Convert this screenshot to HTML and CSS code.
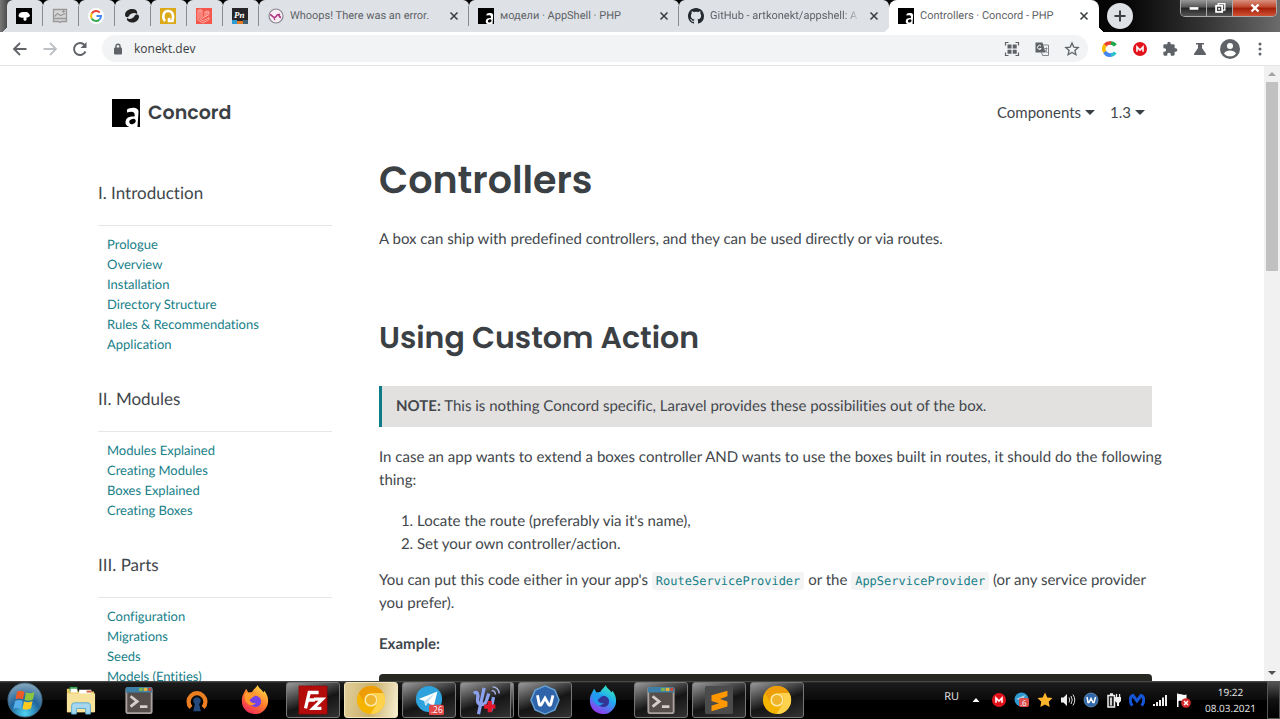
FILE: index.html
```html
<!DOCTYPE html>
<html lang="en">
<head>
    <meta charset="UTF-8">
    <meta name="viewport" content="width=device-width, initial-scale=1.0">
    <title>Controllers · Concord - PHP</title>
    <link rel="stylesheet" href="styles.css">
</head>
<body>
    <!-- shared icons -->
    <svg class="sprite" width="0" height="0" aria-hidden="true">
        <symbol id="i-appshell" viewBox="0 0 28 28">
            <rect width="28" height="28" fill="#000"/>
            <path d="M15 10.500C18 8 27 7.500 26.500 13L25.500 28H22C17 29 13.500 27 13.500 23.500C13.500 19 17 17 22.500 17.500C23.500 12.500 20 12 15 13.500z" fill="#fff"/>
            <ellipse cx="20.500" cy="22.500" rx="3.300" ry="2.500" fill="#000" transform="rotate(-25 20.500 22.500)"/>
        </symbol>
        <symbol id="i-close" viewBox="0 0 16 16">
            <path d="M4.500 4.500l7 7M11.500 4.500l-7 7" stroke="#3c4043" stroke-width="1.600"/>
        </symbol>
        <symbol id="i-mega" viewBox="0 0 16 16">
            <circle cx="8" cy="8" r="7" fill="#e3131b"/>
            <path d="M5 10.800V6L8 9l3-3v4.800" fill="none" stroke="#fff" stroke-width="1.600"/>
        </symbol>
        <symbol id="i-terminal" viewBox="0 0 32 32">
            <rect x="2.500" y="3" width="27" height="27" rx="2" fill="#564e4b" stroke="#a9a29e" stroke-width="2"/>
            <path d="M2 4a2 2 0 0 1 2-2h24a2 2 0 0 1 2 2v4H2z" fill="#3d7fa6"/>
            <path d="M16 3h4v3.500h-4z" fill="#7db04e"/><path d="M21 3h4v3.500h-4z" fill="#e0b53a"/><path d="M26 3h3v3.500h-3z" fill="#cf4632"/>
            <path d="M7 12l7 5.500L7 23M17 23h8" fill="none" stroke="#d5ceca" stroke-width="3"/>
        </symbol>
        <symbol id="i-canary" viewBox="0 0 32 32">
            <circle cx="16" cy="16" r="15" fill="#f5b400"/>
            <path d="M3 8.500A15 15 0 0 1 29 8.500H16A7.500 7.500 0 0 0 9.500 19.700z" fill="#ee9d09"/>
            <path d="M29 8.500A15 15 0 0 1 15.500 31l7-11.500A7.500 7.500 0 0 0 16 8.500z" fill="#ffd24d"/>
            <circle cx="16" cy="16" r="7" fill="#fde9a8"/>
            <circle cx="16" cy="16" r="5.300" fill="#efb32c"/>
        </symbol>
        <symbol id="i-shape-w" viewBox="0 0 32 32">
            <path d="M16 1l10.500 4.500L31 16l-4.500 10.500L16 31 5.500 26.500 1 16 5.500 5.500z" fill="#2f64ab" stroke="#65a4d8" stroke-width="1.500"/>
            <path d="M8 11l2 10c.5 1 1.500 1 2 0l4-7 4 7c.5 1 1.500 1 2 0l2.500-10" fill="none" stroke="#fff" stroke-width="3"/>
        </symbol>
        <symbol id="i-fox" viewBox="0 0 32 32">
            <path d="M5 7l1.500-3 2.500 4 4-.5C15 4 18 2 19 0c1 4 4 4 6 8l1-2c4 5 5 11 3 16-3 7-9 9.500-14 9C7 30 1.500 24 2 16c0-4 1.500-6 3-9z"/>
        </symbol>
    </svg>

    <header class="browser">
        <div class="tab-strip">
            <div class="tab pinned first">
                <svg class="icon" viewBox="0 0 16 16"><rect width="16" height="16" fill="#000"/><path d="M2.500 8c0-2.500 2-4 5-4h3c2 .5 3 2 3.500 3.500-.5 1.500-2 2-3.500 2L10.500 12l-1.500 1-1.500-1V9.500C5 10 3.500 9.500 2.500 8z" fill="#fff"/></svg>
            </div>
            <div class="tab pinned">
                <svg class="icon" viewBox="0 0 16 16"><path d="M1.500 1.500h13v9h-13zM1.500 13.500h5L8 14.500l1.500-1h5v-3h-13z" fill="#d5d5d5" stroke="#999" stroke-width="1.300"/><path d="M2.500 8.500l3-3 3 2 5-2M11.500 2v3M10 3.500h3" fill="none" stroke="#999" stroke-width="1.200"/></svg>
            </div>
            <div class="tab pinned">
                <svg class="icon" viewBox="0 0 16 16"><circle cx="8" cy="8" r="8" fill="#fff"/><g fill="none" stroke-width="2"><path d="M11.700 4.500A5 5 0 0 0 3.700 5.500" stroke="#ea4335"/><path d="M3.700 5.500a5 5 0 0 0 0 5" stroke="#fbbc05"/><path d="M3.700 10.500a5 5 0 0 0 7.600 1.200" stroke="#34a853"/><path d="M11.300 11.700A5 5 0 0 0 13 8H8.500" stroke="#4285f4"/></g></svg>
            </div>
            <div class="tab pinned">
                <svg class="icon" viewBox="0 0 16 16"><path d="M1 7C1 3 5 .5 9 1c3 .3 5 2.500 4 5-2-1.500-6-1.500-8 2-1.500 2-3.500 1.500-4-1z" fill="#222"/><path d="M15 8.500c0 4-4 6.500-7.500 6-3-.3-5-2-4.500-4.500 3 2 6 .5 7.500-2 1.500-2 4-2 4.500.5z" fill="#222"/></svg>
            </div>
            <div class="tab pinned">
                <svg class="icon" viewBox="0 0 16 16"><rect width="16" height="16" fill="#dcaa18"/><path d="M5 13C2 10 3 3 8 3s6 5 4.500 10H9V9.500" fill="none" stroke="#fff" stroke-width="2.600"/><circle cx="8" cy="8.500" r="1.700" fill="#dcaa18"/></svg>
            </div>
            <div class="tab pinned">
                <svg class="icon" viewBox="0 0 16 16"><rect width="16" height="16" fill="#f4574c"/><path d="M2 2.500l2-1 2 1v8l7-4V4L11 3 9 4v5M2 2.500V12l5 3 6-3.500v-2M2 2.500l2 1.200 2-1.200M4 4v7l3 2 6-3.500M9 4l2 1.200L13 4M11 5.500V8" fill="none" stroke="#ffc2bd" stroke-width=".8"/></svg>
            </div>
            <div class="tab pinned">
                <svg class="icon" viewBox="0 0 16 16"><rect width="16" height="16" fill="#26262a"/><path d="M0 12h5v4H0z" fill="#2d9ad0"/><path d="M5 13h6v3H5z" fill="#e57b22"/><path d="M11 12h5v4h-5z" fill="#3c5d72"/><text class="pn-mark" x="2" y="10">Pn</text></svg>
            </div>
            <div class="tab">
                <svg class="icon" viewBox="0 0 16 16"><circle cx="8" cy="8" r="7" fill="#f6eef4" stroke="#8a8790" stroke-width="1.200"/><path d="M2 6.500c2 .500 2.500 3 4.500 3s2-3 3.500-3 1 3 3 3" fill="none" stroke="#b0347f" stroke-width="1.700"/><path d="M6 10l1 2M10 7l2-1" stroke="#b0347f" stroke-width="1.200"/></svg>
                <span class="tab-title">Whoops! There was an error.</span>
                <button class="tab-close" aria-label="Close tab"><svg class="icon"><use href="#i-close"/></svg></button>
            </div>
            <div class="tab">
                <svg class="icon"><use href="#i-appshell"/></svg>
                <span class="tab-title">модели · AppShell · PHP</span>
                <button class="tab-close" aria-label="Close tab"><svg class="icon"><use href="#i-close"/></svg></button>
            </div>
            <div class="tab last">
                <svg class="icon" viewBox="0 0 16 16"><path fill="#24292e" d="M8 0C3.580 0 0 3.580 0 8c0 3.540 2.290 6.530 5.470 7.590.4.070.55-.17.55-.38 0-.19-.01-.82-.01-1.490-2.010.37-2.530-.49-2.690-.94-.09-.23-.48-.94-.82-1.130-.28-.15-.68-.52-.01-.53.63-.01 1.080.58 1.230.82.72 1.210 1.870.87 2.330.66.07-.52.28-.87.51-1.070-1.780-.2-3.640-.89-3.640-3.950 0-.87.31-1.590.82-2.150-.08-.2-.36-1.020.08-2.120 0 0 .67-.21 2.200.82.64-.18 1.320-.27 2-.27s1.360.09 2 .27c1.530-1.040 2.200-.82 2.200-.82.44 1.100.16 1.920.08 2.120.51.56.82 1.270.82 2.150 0 3.070-1.870 3.750-3.650 3.950.29.25.54.73.54 1.480 0 1.070-.01 1.930-.01 2.200 0 .21.15.46.55.38A8.010 8.010 0 0 0 16 8c0-4.420-3.580-8-8-8z"/></svg>
                <span class="tab-title fade">GitHub - artkonekt/appshell: A</span>
                <button class="tab-close" aria-label="Close tab"><svg class="icon"><use href="#i-close"/></svg></button>
            </div>
            <div class="tab active">
                <svg class="icon"><use href="#i-appshell"/></svg>
                <span class="tab-title">Controllers · Concord - PHP</span>
                <button class="tab-close" aria-label="Close tab"><svg class="icon"><use href="#i-close"/></svg></button>
            </div>
            <button class="new-tab" aria-label="New tab">
                <svg class="icon" viewBox="0 0 16 16"><path d="M8 2.500v11M2.500 8h11" stroke="#3c4043" stroke-width="2"/></svg>
            </button>
            <div class="window-controls">
                <button aria-label="Minimize"><svg viewBox="0 0 16 16"><rect x="3" y="7" width="10" height="3" fill="#fff"/></svg></button>
                <button aria-label="Restore"><svg viewBox="0 0 16 16"><path d="M6 5V3h7.500v7.500H11" fill="none" stroke="#fff" stroke-width="1.500"/><rect x="3.500" y="5.500" width="7" height="7" fill="#444" stroke="#fff" stroke-width="2"/><path d="M6 8h2v2H6z" fill="#fff"/></svg></button>
                <button class="win-close" aria-label="Close"><svg viewBox="0 0 16 16"><path d="M4 4l8 8M12 4l-8 8" stroke="#fff" stroke-width="2.800"/></svg></button>
            </div>
        </div>

        <div class="toolbar">
            <button class="tool" aria-label="Back"><svg class="icon" viewBox="0 0 16 16"><path d="M14.500 8h-12M8 2L2 8l6 6" fill="none" stroke="#5f6368" stroke-width="1.800"/></svg></button>
            <button class="tool" aria-label="Forward"><svg class="icon" viewBox="0 0 16 16"><path d="M1.500 8h12M8 2l6 6-6 6" fill="none" stroke="#bdc1c6" stroke-width="1.800"/></svg></button>
            <button class="tool" aria-label="Reload"><svg class="icon" viewBox="0 0 16 16"><path d="M13.500 10.500A6 6 0 1 1 12.500 4" fill="none" stroke="#5f6368" stroke-width="1.900"/><path d="M14.500 1v6h-6z" fill="#5f6368"/></svg></button>
            <div class="omnibox">
                <svg class="lock" viewBox="0 0 10 12"><rect x="1" y="4.500" width="8" height="7" rx="1" fill="#5f6368"/><path d="M3 5V3.200a2 2 0 0 1 4 0V5" fill="none" stroke="#5f6368" stroke-width="1.400"/></svg>
                <input type="text" aria-label="Address" value="konekt.dev">
                <button class="tool" aria-label="QR code"><svg class="icon" viewBox="0 0 16 16"><path d="M1.500 4.500v-3h3M11.500 1.500h3v3M14.500 11.500v3h-3M4.500 14.500h-3v-3" fill="none" stroke="#5f6368" stroke-width="1.200"/><path d="M3.500 3.500h4v4h-4zM8.700 3.500h4v4h-4zM3.500 8.700h4v4h-4zM8.700 8.700h4v4h-4z" fill="#5f6368"/></svg></button>
                <button class="tool" aria-label="Translate"><svg class="icon" viewBox="0 0 16 16"><path d="M9 4h5.500v10.500H8.500l-1-3" fill="#f1f3f4" stroke="#80868b"/><path d="M1.500 1.500h7l3 10h-10z" fill="#5f6368"/><path d="M10.500 7.500h3M12.500 6.500v1c0 1.500-.5 2.500-1 3.500M11.500 9.500l2 2.500" fill="none" stroke="#80868b"/><path d="M7 5a2 2 0 1 0 .200 2.500H5.500" fill="none" stroke="#fff"/></svg></button>
                <button class="tool" aria-label="Bookmark"><svg class="icon" viewBox="0 0 16 16"><path d="M8 2l1.800 4.100 4.400.400-3.300 2.900 1 4.300L8 11.400l-3.900 2.300 1-4.300L1.800 6.500l4.400-.400z" fill="none" stroke="#5f6368" stroke-width="1.300"/></svg></button>
            </div>
            <button class="tool" aria-label="C extension"><svg class="icon" viewBox="0 0 16 16"><g fill="none" stroke-width="3.600"><path d="M13.300 4.500A6 6 0 0 0 8 2" stroke="#18a74b"/><path d="M9 2.100A6 6 0 0 0 3 4.500" stroke="#ea4335"/><path d="M3.200 4A6 6 0 0 0 3 11.300" stroke="#fbbc05"/><path d="M2.800 11a6 6 0 0 0 7 2.700" stroke="#4285f4"/><path d="M9 13.900a6 6 0 0 0 4.300-2.400" stroke="#2dc0cd"/></g></svg></button>
            <button class="tool" aria-label="MEGA"><svg class="icon"><use href="#i-mega"/></svg></button>
            <button class="tool" aria-label="Extensions"><svg class="icon" viewBox="0 0 24 24"><path fill="#5f6368" d="M20.500 11H19V7c0-1.100-.9-2-2-2h-4V3.500a2.500 2.500 0 0 0-5 0V5H4c-1.100 0-2 .9-2 2v3.800h1.500a2.700 2.700 0 0 1 0 5.400H2V20c0 1.100.9 2 2 2h3.800v-1.500a2.700 2.700 0 0 1 5.400 0V22H17c1.100 0 2-.9 2-2v-4h1.500a2.500 2.500 0 0 0 0-5z"/></svg></button>
            <button class="tool" aria-label="Labs"><svg class="icon" viewBox="0 0 16 16"><path d="M4 2h8v1.500h-2V7l3.800 5.500c.5.800.2 1.500-.8 1.500H3c-1 0-1.300-.7-.8-1.500L6 7V3.500H4z" fill="#5f6368"/></svg></button>
            <button class="tool profile" aria-label="Profile"><svg class="avatar" viewBox="0 0 20 20"><circle cx="10" cy="10" r="10" fill="#5f6368"/><circle cx="10" cy="7" r="3" fill="#fff"/><path d="M4 14.500c1.200-2.200 3.500-3 6-3s4.800.800 6 3c-1.500 2-3.500 2.800-6 2.800S5.500 16.500 4 14.500z" fill="#fff"/></svg></button>
            <button class="tool" aria-label="Menu"><svg class="icon" viewBox="0 0 16 16"><g fill="#5f6368"><circle cx="8" cy="3" r="1.500"/><circle cx="8" cy="8" r="1.500"/><circle cx="8" cy="13" r="1.500"/></g></svg></button>
        </div>
    </header>

    <div class="viewport">
        <div class="page">
            <div class="container">
                <nav class="navbar">
                    <a class="brand" href="#">
                        <svg class="brand-logo"><use href="#i-appshell"/></svg>
                        <span>Concord</span>
                    </a>
                    <div class="nav-links">
                        <button class="dropdown">Components</button>
                        <button class="dropdown">1.3</button>
                    </div>
                </nav>

                <div class="columns">
                    <aside class="sidebar">
                        <section>
                            <h4>I. Introduction</h4>
                            <ul>
                                <li><a href="#">Prologue</a></li>
                                <li><a href="#">Overview</a></li>
                                <li><a href="#">Installation</a></li>
                                <li><a href="#">Directory Structure</a></li>
                                <li><a href="#">Rules &amp; Recommendations</a></li>
                                <li><a href="#">Application</a></li>
                            </ul>
                        </section>
                        <section>
                            <h4>II. Modules</h4>
                            <ul>
                                <li><a href="#">Modules Explained</a></li>
                                <li><a href="#">Creating Modules</a></li>
                                <li><a href="#">Boxes Explained</a></li>
                                <li><a href="#">Creating Boxes</a></li>
                            </ul>
                        </section>
                        <section>
                            <h4>III. Parts</h4>
                            <ul>
                                <li><a href="#">Configuration</a></li>
                                <li><a href="#">Migrations</a></li>
                                <li><a href="#">Seeds</a></li>
                                <li><a href="#">Models (Entities)</a></li>
                            </ul>
                        </section>
                    </aside>

                    <main class="content">
                        <h1>Controllers</h1>
                        <p>A box can ship with predefined controllers, and they can be used directly or via routes.</p>
                        <h2>Using Custom Action</h2>
                        <blockquote><strong>NOTE:</strong> This is nothing Concord specific, Laravel provides these possibilities out of the box.</blockquote>
                        <p>In case an app wants to extend a boxes controller AND wants to use the boxes built in routes, it should do the following thing:</p>
                        <ol>
                            <li>Locate the route (preferably via it's name),</li>
                            <li>Set your own controller/action.</li>
                        </ol>
                        <p>You can put this code either in your app's <code>RouteServiceProvider</code> or the <code>AppServiceProvider</code> (or any service provider you prefer).</p>
                        <p><strong>Example:</strong></p>
                        <pre></pre>
                    </main>
                </div>
            </div>
        </div>
        <div class="scrollbar">
            <svg viewBox="0 0 16 16"><path d="M4 10l4-4 4 4z" fill="#a3a3a3"/></svg>
            <div class="track"><div class="thumb"></div></div>
            <svg viewBox="0 0 16 16"><path d="M4 6l4 4 4-4z" fill="#505050"/></svg>
        </div>
    </div>

    <footer class="taskbar">
        <button class="start" aria-label="Start">
            <svg viewBox="0 0 36 36">
                <defs><radialGradient id="orb" cx=".5" cy=".9" r=".9"><stop offset="0" stop-color="#4fd5f5"/><stop offset=".5" stop-color="#1f659c"/><stop offset="1" stop-color="#8ba9bd"/></radialGradient></defs>
                <circle cx="18" cy="18" r="17" fill="url(#orb)" stroke="#456c85"/>
                <path d="M10 10c3-2 5-1 7.500 0l-1.500 7.500c-3-1.200-5-1.200-7.500 0z" fill="#ed5b26"/>
                <path d="M19 10.500c3 1.200 5.500 1 8.500-.5L26 17.500c-3 1.500-5 1.500-8.500.500z" fill="#8cc63f"/>
                <path d="M8 19c3-1.500 5-1.200 7.500 0L14 26.500c-2.500-1.200-5-1-7.500 0z" fill="#56aeea"/>
                <path d="M17 19.500c3 1.200 5.500 1 8.500-.500L24 26.500c-3 1.300-5.500 1.500-8.500.5z" fill="#ffc91e"/>
            </svg>
        </button>
        <button class="task" aria-label="Explorer">
            <svg viewBox="0 0 32 32"><path d="M1 4h10l2 3h17v22H1z" fill="#e8c968"/><path d="M4 2h8v5H4z" fill="#3aa657"/><path d="M5 4h7v4H5zM14 5h13v5H14z" fill="#fff"/><path d="M22 6h5v2h-5z" fill="#d35a3c"/><path d="M1 9h30v20H1z" fill="#f6e29b"/><path d="M6 31v-9q0-3 3-3h14q3 0 3 3v9h-5v-6H11v6z" fill="#a5d8ef" stroke="#58a7cf"/></svg>
        </button>
        <button class="task" aria-label="Terminal"><svg><use href="#i-terminal"/></svg></button>
        <button class="task" aria-label="OpenVPN">
            <svg viewBox="0 0 32 32"><path d="M9.500 24a9 9 0 1 1 13 0" fill="none" stroke="#ea7e20" stroke-width="4.500"/><path d="M16 13a4 4 0 0 1 2.300 7.300L20 28h-8l1.700-7.700A4 4 0 0 1 16 13z" fill="#244a7d"/></svg>
        </button>
        <button class="task" aria-label="Firefox">
            <svg viewBox="0 0 32 32"><defs><linearGradient id="fx" x1=".8" y1="0" x2=".2" y2="1"><stop offset="0" stop-color="#ffe14a"/><stop offset=".5" stop-color="#ff7b29"/><stop offset="1" stop-color="#f0245f"/></linearGradient></defs><use href="#i-fox" fill="url(#fx)"/><circle cx="16.500" cy="17.500" r="6" fill="#7542e5"/><path d="M5 9c5-2 8 1 11 3-3 0-3 3-6 3 0 4 4 5 7 4-3 5-11 2-12-5z" fill="#ff9b2d"/></svg>
        </button>
        <button class="task open" aria-label="FileZilla">
            <svg viewBox="0 0 32 32"><rect x="1" y="1" width="30" height="30" fill="#b40b0b" stroke="#8e0808" stroke-dasharray="2 1"/><path d="M8 25l4-17h10M10 16h8M17 15h9l-10 10h9" fill="none" stroke="#fff" stroke-width="3.500"/></svg>
        </button>
        <button class="task open current" aria-label="Chrome Canary"><svg><use href="#i-canary"/></svg></button>
        <button class="task open" aria-label="Telegram">
            <svg viewBox="0 0 32 32"><circle cx="16" cy="15" r="14" fill="#2ea2dc"/><path d="M5 15l20-8-4 16-6-4-3 3-1-5z" fill="#fff"/><path d="M11 17l11-8-7 9-2 4z" fill="#c3dff0"/><rect x="16" y="21" width="16" height="11" rx="2" fill="#e04747"/><text class="badge-text" x="18" y="30">.26</text></svg>
        </button>
        <button class="task open stacked" aria-label="Psi">
            <svg viewBox="0 0 32 32"><path d="M3 9c4-3 5 1 4 6-1 8 8 8 10 0l2-6M14 3L8 31M24 13l-3 15" fill="none" stroke="#8ba1ee" stroke-width="3.500"/><path d="M22 6c2 0 4 1 4 4M23 2c4 0 7 3 7 7" fill="none" stroke="#aab4e8" stroke-width="1.500"/><path d="M20 17v12M14 23h12" stroke="#e3182d" stroke-width="4.500"/></svg>
        </button>
        <button class="task open" aria-label="W"><svg><use href="#i-shape-w"/></svg></button>
        <button class="task" aria-label="Firefox Developer Edition">
            <svg viewBox="0 0 32 32"><defs><linearGradient id="fd" x1=".8" y1="0" x2=".3" y2="1"><stop offset="0" stop-color="#38f0b5"/><stop offset=".45" stop-color="#21a8f2"/><stop offset="1" stop-color="#9a31ee"/></linearGradient></defs><use href="#i-fox" fill="url(#fd)"/><circle cx="16.500" cy="17.500" r="6" fill="#343494"/><path d="M5 9c5-2 8 1 11 3-3 0-3 3-6 3 0 4 4 5 7 4-3 5-11 2-12-5z" fill="#2199f0"/></svg>
        </button>
        <button class="task open" aria-label="Terminal window"><svg><use href="#i-terminal"/></svg></button>
        <button class="task open" aria-label="Sublime Text">
            <svg viewBox="0 0 32 32"><rect x="1" y="1" width="30" height="30" rx="2" fill="#4b4b4b"/><path d="M8 11l17-5v6l-8 3 8 2.500V23L8 28v-6l8-2.500L8 17z" fill="#ff9800"/></svg>
        </button>
        <button class="task open" aria-label="Chrome Canary window"><svg><use href="#i-canary"/></svg></button>

        <div class="tray">
            <span class="lang">RU</span>
            <svg viewBox="0 0 16 16"><path d="M4.500 10L8 6l3.500 4z" fill="#fff"/></svg>
            <svg><use href="#i-mega"/></svg>
            <svg viewBox="0 0 16 16"><circle cx="7.500" cy="7.500" r="7" fill="#2e98cf"/><path d="M2 7l9-4-2 6z" fill="#a9cfe6"/><rect x="5" y="6" width="10" height="9" rx="2" fill="#dd4b4b"/><text class="badge-mini" x="6" y="14">.6</text></svg>
            <svg viewBox="0 0 16 16"><path d="M8 .500l2.300 4.900 5.200.6-3.800 3.700 1 5.300L8 12.500 3.300 15l1-5.300L.500 6l5.200-.6z" fill="#fdb62c"/></svg>
            <svg viewBox="0 0 16 16"><path d="M1 5.500h2.500L7 2v12l-3.500-3.500H1z" fill="#eee"/><path d="M9 5.500q1.500 2.500 0 5M11 4q2.500 4 0 8M13 2.500q3.500 5.500 0 11" fill="none" stroke="#ddd"/></svg>
            <svg viewBox="0 0 32 32"><circle cx="16" cy="16" r="14" fill="#2f67aa" stroke="#8ac0e4"/><path d="M8 10l2 11h2l4-8 4 8h2l3-11" fill="none" stroke="#fff" stroke-width="3"/></svg>
            <svg viewBox="0 0 16 16"><path d="M2 3.500h6.500V15H2zM4 2h3" fill="#222" stroke="#eee" stroke-width="1.500"/><path d="M4 5.500h2v8H4z" fill="#ccc"/><path d="M9 5h6v4l-2 2v3h-2v-3L9 9zM10 2h1.200v3H10zM13 2h1.200v3H13z" fill="#eee"/></svg>
            <svg viewBox="0 0 16 16"><path d="M3.500 13.500C0 10 1 4 4 3.500L8 9l4-5.500c3 .5 4 6.500.5 10" fill="none" stroke="#1654d8" stroke-width="3"/></svg>
            <svg viewBox="0 0 16 16"><path d="M1 12h2v2H1zM4 10h2v4H4zM7 8h2v6H7zM10 5.500h2V14h-2zM13 3h2v11h-2z" fill="#eee"/></svg>
            <svg viewBox="0 0 16 16"><path d="M2 1.500h1.500V15H2zM3.500 2.500c3-1.500 4 1.500 8 0v6.500c-3 1.500-5-1-8 0z" fill="#fff"/><circle cx="11" cy="11" r="4.800" fill="#d92a2a"/><path d="M9 9l4 4M13 9l-4 4" stroke="#fff" stroke-width="1.500"/></svg>
            <div class="clock">
                <time>19:22</time>
                <time>08.03.2021</time>
            </div>
        </div>
        <button class="show-desktop" aria-label="Show desktop"></button>
    </footer>
</body>
</html>
```
FILE: styles.css
```css
* {
    box-sizing: border-box;
}
body {
    margin: 0;
    height: 100vh;
    display: flex;
    flex-direction: column;
    overflow: hidden;
    background: #fff;
    color: #42474c;
    font-family: Lato, "Open Sans", sans-serif;
    font-size: 15px;
    line-height: 23px;
    text-rendering: geometricPrecision;
    font-variant-ligatures: no-common-ligatures;
}
button {
    border: 0;
    padding: 0;
    background: none;
    color: inherit;
    font: inherit;
}
a {
    color: #178089;
    text-decoration: none;
}
.sprite {
    position: absolute;
}
.icon {
    width: 16px;
    height: 16px;
    flex: none;
    display: block;
}

/* Browser chrome */
.browser {
    flex: none;
    border-bottom: 1px solid #e4e5e7;
}
.tab-strip {
    display: flex;
    height: 32px;
    padding-left: 7px;
    background: linear-gradient(to right, #777 0, #000 20px, #050505 88%, #333 94%, #6b6b6b 100%);
}
.tab {
    position: relative;
    flex: 0 1 210px;
    min-width: 0;
    display: flex;
    align-items: center;
    gap: 6px;
    padding: 0 7px 0 9px;
    background: linear-gradient(#888c91, #888c91) right center / 1px 20px no-repeat #dee1e6;
    border-radius: 6px 6px 0 0;
    font-family: Roboto, "Noto Sans", sans-serif;
    font-size: 11px;
    line-height: 16px;
    color: #5f6368;
}
.tab.pinned {
    flex: none;
    width: 36px;
}
.tab.last {
    background: #dee1e6;
}
.tab.active {
    background: #fff;
    border-radius: 8px 8px 0 0;
}
.tab.first::before,
.tab.active::before,
.tab.active::after {
    content: "";
    position: absolute;
    bottom: 0;
    width: 7px;
    height: 7px;
}
.tab.first::before {
    right: 100%;
    background: radial-gradient(circle at 0 0, transparent 7px, #dee1e6 7px);
}
.tab.active::before {
    right: 100%;
    background: radial-gradient(circle at 0 0, transparent 7px, #fff 7px);
}
.tab.active::after {
    left: 100%;
    background: radial-gradient(circle at 100% 0, transparent 7px, #fff 7px);
}
.tab-title {
    flex: 1;
    overflow: hidden;
    white-space: nowrap;
}
.tab-title.fade {
    -webkit-mask-image: linear-gradient(to right, #000 90%, transparent);
    mask-image: linear-gradient(to right, #000 90%, transparent);
}
.new-tab {
    flex: none;
    align-self: center;
    width: 26px;
    height: 26px;
    margin-left: 8px;
    display: grid;
    place-items: center;
    border-radius: 50%;
    background: #dee1e6;
}
.window-controls {
    display: flex;
    height: 17px;
    margin-left: auto;
    margin-right: 3px;
    border: 1px solid #aaa;
    border-top: 0;
    border-radius: 0 0 5px 5px;
    overflow: hidden;
}
.window-controls button {
    width: 26px;
    display: grid;
    place-items: center;
    background: linear-gradient(#999, #555 45%, #222 50%, #555);
    border-right: 1px solid #aaa;
}
.window-controls svg {
    width: 14px;
    height: 14px;
}
.window-controls .win-close {
    width: 43px;
    border: 0;
    background: linear-gradient(#d9917e, #bf452c 45%, #a31d08 50%, #cf5234);
}
.toolbar {
    display: flex;
    align-items: center;
    gap: 14px;
    height: 33px;
    padding: 0 12px;
    background: #fff;
}
.toolbar .tool {
    flex: none;
}
.omnibox {
    flex: 1;
    display: flex;
    align-items: center;
    gap: 14px;
    height: 27px;
    padding: 0 8px 0 11px;
    border-radius: 14px;
    background: #f1f3f4;
}
.lock {
    width: 10px;
    height: 12px;
}
.omnibox input {
    flex: 1;
    min-width: 0;
    border: 0;
    padding: 0;
    margin-left: -3px;
    background: none;
    outline: 0;
    color: #3c4043;
    font: 12px/16px "Open Sans", "Noto Sans", sans-serif;
}
.toolbar .profile {
    margin: 0 -2px;
}
.avatar {
    display: block;
    width: 20px;
    height: 20px;
}

/* Documentation page */
.viewport {
    flex: 1;
    min-height: 0;
    display: flex;
}
.page {
    flex: 1;
    min-width: 0;
    overflow: hidden;
}
.container {
    max-width: 1070px;
    margin: 0 auto;
    padding-left: 1px;
}
.navbar {
    display: flex;
    align-items: center;
    justify-content: space-between;
    height: 91px;
    padding: 2px 22px 0 14px;
}
.brand {
    display: flex;
    align-items: center;
    gap: 8px;
    color: #3b4045;
    font-family: Poppins, Inter, sans-serif;
    font-size: 19px;
    font-weight: 600;
}
.brand-logo {
    width: 28px;
    height: 28px;
}
.nav-links {
    display: flex;
    gap: 15px;
}
.dropdown {
    display: flex;
    align-items: center;
    gap: 4px;
}
.dropdown::after {
    content: "";
    border: 5px solid transparent;
    border-top-color: #3b4045;
    border-bottom: 0;
}
.columns {
    display: flex;
    gap: 47px;
}
.sidebar {
    flex: none;
    width: 234px;
    padding-top: 24px;
}
.sidebar section {
    margin-bottom: 33px;
}
.sidebar h4 {
    margin: 0 0 8px;
    padding-bottom: 20px;
    border-bottom: 1px solid #e6e6e6;
    font-size: 17px;
    font-weight: 400;
    line-height: 24px;
}
.sidebar ul {
    list-style: none;
    margin: 0;
    padding: 0 0 0 9px;
    font-size: 13px;
    line-height: 20px;
}
.content {
    flex: 1;
    min-width: 0;
    padding-top: 1px;
}
h1,
h2 {
    color: #3b4045;
    font-family: Poppins, Inter, sans-serif;
    font-weight: 600;
}
h1 {
    margin: 0 0 24px;
    font-size: 38px;
    line-height: 46px;
}
h2 {
    margin: 69px 0 30px;
    font-size: 30px;
    line-height: 36px;
}
p {
    margin: 0 0 18px;
}
blockquote {
    margin: 0 15px 19px 0;
    padding: 9px 14px;
    border-left: 3px solid #0e7c86;
    background: #e2e1e0;
}
ol {
    margin: 0 0 13px;
    padding-left: 38px;
}
code {
    padding: 2px 4px;
    border-radius: 3px;
    background: #f4f4f4;
    color: #178089;
    font-family: "DejaVu Sans Mono", monospace;
    font-size: 12px;
    line-height: 1;
}
pre {
    height: 200px;
    margin: 0 15px 0 0;
    border-radius: 4px;
    background: #272822;
}
.scrollbar {
    flex: none;
    width: 16px;
    display: flex;
    flex-direction: column;
    background: #f1f1f1;
}
.scrollbar svg {
    width: 16px;
    height: 16px;
}
.track {
    flex: 1;
    padding: 0 2px;
}
.thumb {
    height: 32.5%;
    background: #c1c1c1;
}

/* Taskbar */
.taskbar {
    flex: none;
    display: flex;
    gap: 4px;
    height: 38px;
    background: linear-gradient(#555 0, #1b1b1b 2px, #0a0a0a 50%, #000 50%);
    color: #e8e8e8;
    font-family: "Open Sans", "Noto Sans", sans-serif;
}
.start {
    width: 50px;
}
.start svg {
    display: block;
    width: 36px;
    height: 36px;
    margin: 0 auto;
}
.task {
    flex: none;
    width: 54px;
    display: grid;
    place-items: center;
}
.task svg {
    width: 30px;
    height: 30px;
}
.task.open {
    margin: 1px 0;
    border: 1px solid #777;
    border-radius: 3px;
    background: linear-gradient(160deg, #999 0, #444 35%, #151515 55%, #333 100%);
}
.task.current {
    border-color: #f1e5bb;
    background: linear-gradient(100deg, #e2cf9a, #c9b06c 50%, #f7efd2);
}
.task.stacked {
    border-right: 4px double #777;
}
.badge-text {
    fill: #fff;
    font-size: 9px;
}
.badge-mini {
    fill: #fff;
    font-size: 8px;
}
.pn-mark {
    fill: #fff;
    font: italic bold 9px "Liberation Serif", serif;
}
.tray {
    display: flex;
    align-items: center;
    gap: 7px;
    margin-left: auto;
    font-size: 10px;
    line-height: 16px;
}
.tray svg {
    width: 16px;
    height: 16px;
}
.lang {
    margin: 0 2px 6px 0;
    font-size: 11px;
}
.clock {
    display: flex;
    flex-direction: column;
    align-items: center;
    margin: 0 7px 0 7px;
}
.show-desktop {
    width: 13px;
    border: 1px solid #555;
    background: linear-gradient(#555, #111 50%, #000);
}
```
